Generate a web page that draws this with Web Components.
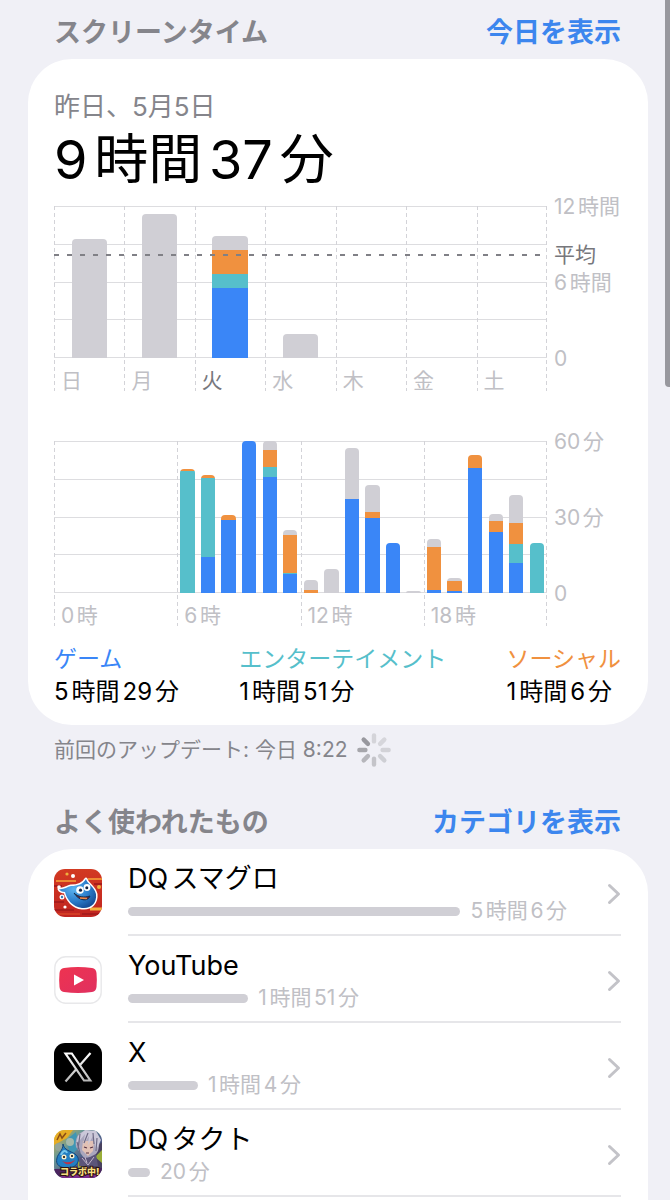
<!DOCTYPE html>
<html lang="ja">
<head>
<meta charset="UTF-8">
<meta name="viewport" content="width=device-width, initial-scale=1.0">
<title>スクリーンタイム</title>
<style>
  :root {
    --blue: #3a86f7;
    --teal: #56bfcb;
    --orange: #f0913f;
    --gray: #d0cfd5;
    --link: #3c86ee;
    --label: #85858b;
    --faint: #c0c0c5;
    --line: #dddde0;
  }
  html {
    background: #f0f0f6;
  }
  body {
    margin: 0;
    font-family: Inter, "Noto Sans CJK JP", sans-serif;
    font-size: 21px;
    color: #000;
    text-autospace: normal;
  }
</style>
</head>
<body>
<screen-time-page></screen-time-page>

<script>
const CHARTS = {
  week: {
    max: 12,
    average: 8.1,
    barWidth: '50%',
    axis: ['12時間', '6時間', '0'],
    ticks: ['日', '月', '火', '水', '木', '金', '土'],
    current: 2,
    // each bar: [game, entertainment, social, other]
    bars: [
      [0, 0, 0, 9.4], [0, 0, 0, 11.4], [5.5, 1.1, 1.9, 1.1], [0, 0, 0, 1.9],
      [], [], []
    ]
  },
  day: {
    max: 60,
    barWidth: '70%',
    axis: ['60分', '30分', '0'],
    ticks: ['0時', '6時', '12時', '18時'],
    bars: [
      [], [], [], [], [], [],
      [0, 48.3, 0.6, 0], [14.4, 31.2, 0.8, 0], [29, 0, 1.7, 0],
      [60, 0, 0, 0], [45.7, 3.9, 6.7, 3.7], [7.5, 0.5, 14.8, 2.1],
      [0, 0, 1.2, 4.1], [0, 0, 0, 9.5], [37.1, 0, 0, 20],
      [29.8, 0, 2.1, 10.9], [19.9, 0, 0, 0], [0, 0, 0, 0.8],
      [1.3, 0, 17, 3.2], [0.7, 0, 4.1, 1.2], [49.3, 0, 5.2, 0],
      [24.2, 0, 4.4, 2.4], [12, 7.2, 8.6, 10.8], [0, 19.9, 0, 0]
    ]
  }
};

class SectionHeader extends HTMLElement {
  connectedCallback() {
    this.attachShadow({ mode: 'open' });
    this.shadowRoot.innerHTML = `
      <style>
        :host {
          display: flex;
          justify-content: space-between;
          align-items: center;
          padding: 2px 27px 0 26px;
          line-height: 52px;
          font-size: 27px;
        }
        h2 {
          margin: 0;
          font-size: inherit;
          font-weight: 600;
          color: var(--label);
        }
        a {
          color: var(--link);
          font-weight: 600;
          text-decoration: none;
        }
      </style>
      <h2><slot></slot></h2>
      <a href="#">${this.getAttribute('action')}</a>
    `;
  }
}

class UsageChart extends HTMLElement {
  connectedCallback() {
    const chart = CHARTS[this.getAttribute('name')];
    const colors = ['blue', 'teal', 'orange', 'gray'];

    const ticks = chart.ticks.map((tick, i) =>
      `<div class="tick${i === chart.current ? ' current' : ''}">${tick}</div>`
    ).join('');

    const bars = chart.bars.map(parts => {
      const total = parts.reduce((sum, v) => sum + v, 0);
      const segments = parts.map((v, i) =>
        v ? `<i style="flex: ${v} 0 0; background: var(--${colors[i]})"></i>` : ''
      ).join('');
      return `<div class="slot"><div class="bar" style="height: ${total / chart.max * 100}%">${segments}</div></div>`;
    }).join('');

    const average = chart.average ? `
      <div class="average">
        <div style="flex: ${chart.max - chart.average}"></div>
        <div class="average-row"><hr><span>平均</span></div>
        <div style="flex: ${chart.average}"></div>
      </div>` : '';

    this.attachShadow({ mode: 'open' });
    this.shadowRoot.innerHTML = `
      <style>
        :host {
          display: grid;
          grid-template-columns: 1fr 74px;
          grid-template-rows: 152px 33px;
          color: var(--faint);
          font-size: 21px;
        }
        .lines {
          grid-area: 1 / 1;
          display: flex;
          flex-direction: column;
          justify-content: space-between;
        }
        .lines div {
          height: 1px;
          background: var(--line);
        }
        .ticks {
          grid-area: 1 / 1 / 3 / 2;
          display: flex;
          background: repeating-linear-gradient(#d3d3d8 0 4px, transparent 4px 7px) right / 1px 100% no-repeat;
        }
        .tick {
          flex: 1;
          display: flex;
          align-items: flex-end;
          padding-left: 7px;
          line-height: 20px;
          background: repeating-linear-gradient(#d3d3d8 0 4px, transparent 4px 7px) left / 1px 100% no-repeat;
        }
        .tick.current {
          color: #77777c;
        }
        .bars {
          grid-area: 1 / 1;
          display: flex;
        }
        .slot {
          flex: 1;
          display: flex;
          align-items: flex-end;
          justify-content: center;
        }
        .bar {
          width: ${chart.barWidth};
          display: flex;
          flex-direction: column-reverse;
          border-radius: 4px 4px 0 0;
          overflow: hidden;
        }
        .axis {
          grid-area: 1 / 2;
          display: flex;
          flex-direction: column;
          justify-content: space-between;
          padding-left: 7px;
          line-height: 2px;
          white-space: nowrap;
        }
        .axis span {
          height: 0;
        }
        .average {
          grid-area: 1 / 1 / 2 / 3;
          display: flex;
          flex-direction: column;
        }
        .average-row {
          display: flex;
          align-items: center;
          height: 0;
          line-height: 2px;
          color: #77777c;
        }
        hr {
          flex: 1;
          height: 2px;
          margin: 0;
          border: 0;
          background: repeating-linear-gradient(90deg, #808086 0 5px, transparent 5px 13px);
        }
        .average-row span {
          width: 67px;
          padding-left: 7px;
        }
      </style>
      <div class="lines"><div></div><div></div><div></div><div></div><div></div></div>
      <div class="ticks">${ticks}</div>
      <div class="bars">${bars}</div>
      ${average}
      <div class="axis">${chart.axis.map(t => `<span>${t}</span>`).join('')}</div>
    `;
  }
}

class CategoryTotal extends HTMLElement {
  connectedCallback() {
    this.attachShadow({ mode: 'open' });
    this.shadowRoot.innerHTML = `
      <style>
        :host {
          display: block;
        }
        .name {
          font-size: 23px;
          line-height: 32px;
          color: var(--${this.getAttribute('color')});
        }
        .time {
          font-size: 24px;
          line-height: 34px;
        }
      </style>
      <div class="name">${this.getAttribute('name')}</div>
      <div class="time"><slot></slot></div>
    `;
  }
}

class LoadingSpinner extends HTMLElement {
  connectedCallback() {
    // clockwise from the top
    const shades = ['#d4d4d9', '#d6d6db', '#d2d2d7', '#cecfd4', '#c4c4c9', '#b6b6bb', '#a6a6ab', '#98989e'];
    this.attachShadow({ mode: 'open' });
    this.shadowRoot.innerHTML = `
      <style>
        :host {
          display: block;
        }
        svg {
          display: block;
        }
      </style>
      <svg width="34" height="34" viewBox="-17 -17 34 34" stroke-width="4.4" stroke-linecap="round">
        ${shades.map((c, i) => `<path d="M0-8.6V-14.6" stroke="${c}" transform="rotate(${i * 45})"/>`).join('')}
      </svg>
    `;
  }
}

class AppRow extends HTMLElement {
  connectedCallback() {
    this.attachShadow({ mode: 'open' });
    this.shadowRoot.innerHTML = `
      <style>
        :host {
          display: block;
        }
        a {
          display: flex;
          align-items: center;
          gap: 26px;
          color: inherit;
          text-decoration: none;
        }
        ::slotted(svg) {
          display: block;
          width: 48px;
          height: 48px;
        }
        .body {
          flex: 1;
          display: flex;
          align-items: center;
          padding: 13px 0 8px;
          border-bottom: 2px solid #e6e6e9;
        }
        .info {
          flex: 1;
        }
        .name {
          font-size: 27px;
          line-height: 34px;
        }
        .usage {
          display: flex;
          align-items: center;
          gap: 10px;
          font-size: 21px;
          line-height: 30px;
          color: var(--faint);
        }
        .meter {
          width: ${this.getAttribute('share')}%;
          height: 9px;
          border-radius: 5px;
          background: var(--gray);
        }
        .chevron {
          width: 14px;
          height: 22px;
        }
      </style>
      <a href="#">
        <slot name="icon"></slot>
        <div class="body">
          <div class="info">
            <div class="name">${this.getAttribute('name')}</div>
            <div class="usage"><div class="meter"></div><span>${this.getAttribute('time')}</span></div>
          </div>
          <svg class="chevron" viewBox="0 0 14 22" fill="none" stroke="#c3c3c8" stroke-width="3" stroke-linecap="round" stroke-linejoin="round">
            <path d="M2.5 2.5 11.5 11 2.5 19.5"/>
          </svg>
        </div>
      </a>
    `;
  }
}

class ScreenTimePage extends HTMLElement {
  connectedCallback() {
    this.attachShadow({ mode: 'open' });
    this.shadowRoot.innerHTML = `
      <style>
        :host {
          display: flex;
          flex-direction: column;
          box-sizing: border-box;
          min-height: 100vh;
          padding: 5px 22px 0 28px;
        }
        .card {
          background: #fff;
          border-radius: 44px;
          padding: 0 27px 0 26px;
        }
        .summary {
          padding-top: 30px;
          padding-bottom: 16px;
        }
        .date {
          font-size: 26px;
          line-height: 36px;
          color: var(--label);
          text-autospace: no-autospace;
        }
        h1 {
          margin: 0 0 11px;
          font-size: 54px;
          font-weight: 400;
          line-height: 70px;
        }
        .totals {
          display: flex;
          justify-content: space-between;
          margin-top: 17px;
        }
        .day {
          margin-top: 50px;
        }
        .updated {
          display: flex;
          align-items: center;
          gap: 9px;
          margin-bottom: 20px;
          padding-left: 26px;
          line-height: 50px;
          font-size: 21px;
          color: var(--label);
        }
        .apps {
          flex: 1;
          border-radius: 44px 44px 0 0;
        }
        .scrollbar {
          position: fixed;
          top: 0;
          right: 0;
          width: 5px;
          height: 387px;
          border-radius: 0 0 0 4px;
          background: #98989e;
        }
      </style>

      <section-header action="今日を表示">スクリーンタイム</section-header>
      <section class="card summary">
        <div class="date">昨日、5月5日</div>
        <h1>9時間37分</h1>
        <usage-chart name="week"></usage-chart>
        <usage-chart name="day" class="day"></usage-chart>
        <div class="totals">
          <category-total name="ゲーム" color="blue">5時間29分</category-total>
          <category-total name="エンターテイメント" color="teal">1時間51分</category-total>
          <category-total name="ソーシャル" color="orange">1時間6分</category-total>
        </div>
      </section>
      <div class="updated"><span>前回のアップデート: 今日 8:22</span><loading-spinner></loading-spinner></div>

      <section-header action="カテゴリを表示">よく使われたもの</section-header>
      <section class="card apps">
        <app-row name="DQスマグロ" time="5時間6分" share="69.4">
          <svg slot="icon" viewBox="0 0 48 48">
            <defs>
              <clipPath id="tile"><rect width="48" height="48" rx="11"/></clipPath>
              <linearGradient id="red" x2="0" y2="1"><stop stop-color="#d23a22"/><stop offset="1" stop-color="#c02420"/></linearGradient>
              <radialGradient id="slime" cx=".4" cy=".35" r=".7"><stop stop-color="#5cb4f0"/><stop offset=".6" stop-color="#2b7cca"/><stop offset="1" stop-color="#174f98"/></radialGradient>
            </defs>
            <g clip-path="url(#tile)">
              <rect width="48" height="48" fill="url(#red)"/>
              <path d="M2 12H22M34 10H48" stroke="#ee8a32" stroke-width="2"/>
              <path d="M0 17H8M40 15H48M0 33H10M28 45H48M0 41H20" stroke="#a81c1c" stroke-width="2"/>
              <path d="M36 40H48" stroke="#f3b23e" stroke-width="3"/>
              <path d="M0 45H26" stroke="#e4552b" stroke-width="1"/>
              <path id="body" d="M32 10C33 15 40 17 42 25C43 34 37 40 28 39C19 38 13 31 11 23C8 23 6 22 5 20C9 21 13 18 17 17C24 17 29 15 32 10Z" fill="url(#slime)" stroke="#fff" stroke-width="3" stroke-linejoin="round" paint-order="stroke"/>
              <circle cx="26" cy="21" r="3.8" fill="#fff"/><circle cx="33" cy="18.500" r="3.400" fill="#fff"/>
              <circle cx="26.5" cy="21.2" r="1.6" fill="#152545"/><circle cx="32.8" cy="18.800" r="1.5" fill="#152545"/>
              <path d="M20 24C24 28 30 29 36 27C34 33 25 32 20 24Z" fill="#732536" stroke="#11304f" stroke-width="1"/>
              <path d="M26 29 33 29.500" stroke="#ee8d4c" stroke-width="1.5"/>
              <g fill="#fff"><circle cx="19" cy="7" r="2"/><circle cx="5" cy="18" r="1.8"/><circle cx="8" cy="28" r="2.5"/><circle cx="11" cy="38" r="1.6"/></g>
              <circle cx="8" cy="28" r="1.2" fill="#397bb7"/>
              <g fill="#efb13e"><circle cx="13" cy="5" r="1.600"/><circle cx="45" cy="18" r="2"/></g>
            </g>
          </svg>
        </app-row>

        <app-row name="YouTube" time="1時間51分" share="25.1">
          <svg slot="icon" viewBox="0 0 48 48">
            <defs><linearGradient id="yt" x2="1" y2="1"><stop stop-color="#ee3350"/><stop offset="1" stop-color="#e03060"/></linearGradient></defs>
            <rect x=".8" y=".8" width="46.4" height="46.4" rx="11" fill="#fff" stroke="#e8e8ea" stroke-width="1.4"/>
            <path d="M10 12Q24 10 38 12Q42 12.5 42.5 17Q43.2 24 42.5 31Q42 35.5 38 36Q24 38 10 36Q6 35.5 5.5 31Q4.8 24 5.5 17Q6 12.5 10 12Z" fill="url(#yt)"/>
            <path d="M20 18.5V29.5L30 24Z" fill="#fff"/>
          </svg>
        </app-row>

        <app-row name="X" time="1時間4分" share="14.6">
          <svg slot="icon" viewBox="0 0 48 48">
            <defs><linearGradient id="silver" x2="0" y2="1"><stop stop-color="#fff"/><stop offset="1" stop-color="#b8b8b8"/></linearGradient></defs>
            <rect width="48" height="48" rx="11"/>
            <g fill="none" stroke="url(#silver)" stroke-width="2.2">
              <path d="M11.5 10.5H17.8L36.3 37.5H30Z"/>
              <path d="M36.5 10 25.8 22.3M22 26.5 11.5 38.5"/>
            </g>
          </svg>
        </app-row>

        <app-row name="DQタクト" time="20分" share="4.6">
          <svg slot="icon" viewBox="0 0 48 48">
            <defs>
              <linearGradient id="sky" x2="1" y2="1"><stop stop-color="#e8b62d"/><stop offset=".3" stop-color="#6c9a96"/><stop offset=".6" stop-color="#4d5b88"/><stop offset="1" stop-color="#3d2a61"/></linearGradient>
              <clipPath id="tile4"><rect width="48" height="48" rx="11"/></clipPath>
            </defs>
            <g clip-path="url(#tile4)">
              <rect width="48" height="48" fill="url(#sky)"/>
              <path d="M0 0H19L13 8 0 15Z" fill="#e6ad25"/>
              <path d="M3 10 6 4 8 8 12 3" stroke="#8b4c15" stroke-width="1.5" fill="none"/>
              <path d="M12 10 22 2 25 17 17 26Z" fill="#3f96b4"/>
              <path d="M37 22 48 12V42H25Z" fill="#49425f"/>
              <path d="M41 27 48 20V33ZM24 31 31 36 24 38Z" fill="#99ad38"/>
              <path d="M22 17C20 6 27-1 36 1C45 1 47 10 44 21L40 27 30 28Z" fill="#aaa6bd"/>
              <path d="M29 11 40 11 39 21 34 26 28 20Z" fill="#e2c1b5"/>
              <path d="M22 15 31 4 29 15 35 6 34 15 39 6 42 20 47 10 42 1 31 0 24 6Z" fill="#cbc8d9"/>
              <path d="M26 4 24 19M34 3 30 13M39 3 40 14M43 8 42 21M23 12 26 23" stroke="#6f6b86" stroke-width="1.2"/>
              <path d="M30 17 33 18M36 18 39 17M32 23 35 23" stroke="#573245" stroke-width="1.2"/>
              <path d="M26 27 34 28 42 24 44 36H25Z" fill="#5c557a"/>
              <path d="M28 28 34 35 40 27M31 27 33 33" stroke="#c2b6cb" fill="none"/>
              <circle cx="5" cy="17" r="4" fill="#93a59a"/><circle cx="16" cy="12" r="4" fill="#a5b9aa"/>
              <path d="M9 14C10 20 16 21 21 24C28 29 23 38 14 38C6 38 1 35 3 28C4 23 9 21 9 14Z" fill="#237fc2" stroke="#15477b"/>
              <path d="M7 25C9 20 12 20 13 23" stroke="#77c6eb" stroke-width="2" fill="none"/>
              <circle cx="10" cy="27" r="2.5" fill="#f8edcb"/><circle cx="18" cy="26" r="2.5" fill="#f8edcb"/>
              <circle cx="10" cy="27" r="1"/><circle cx="18" cy="26" r="1"/>
              <path d="M8 31Q15 34 21 30Q18 35 12 34Z" fill="#bb3447"/>
              <path d="M0 39 48 38V48H0Z" fill="#4b245f"/>
              <path d="M6 46 44 44V48H8Z" fill="#7d2e8d"/>
              <text x="6" y="45" font-size="9" font-weight="900" fill="#f7df82" stroke="#2c1410" stroke-width="2" paint-order="stroke">コラボ中!</text>
            </g>
          </svg>
        </app-row>
      </section>
      <div class="scrollbar"></div>
    `;
  }
}

customElements.define('section-header', SectionHeader);
customElements.define('usage-chart', UsageChart);
customElements.define('category-total', CategoryTotal);
customElements.define('loading-spinner', LoadingSpinner);
customElements.define('app-row', AppRow);
customElements.define('screen-time-page', ScreenTimePage);
</script>
</body>
</html>
